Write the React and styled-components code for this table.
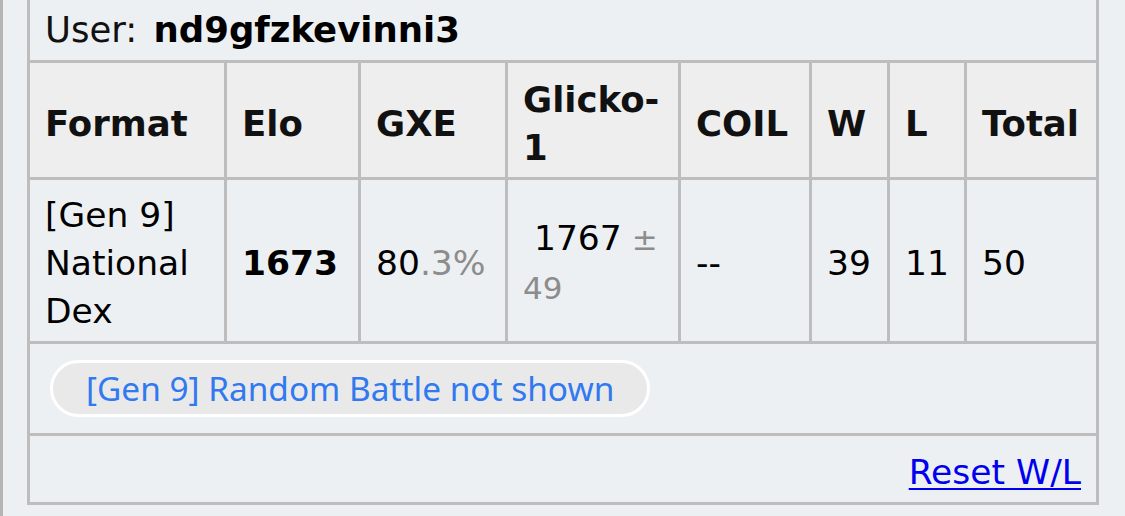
import React from "react";
import styled, { createGlobalStyle } from "styled-components";

const GlobalStyle = createGlobalStyle`
  html, body {
    margin: 0;
    padding: 0;
    background: #edf0f3;
    overflow: hidden;
  }
  body {
    font-family: "DejaVu Sans", Verdana, sans-serif;
  }
`;

const Panel = styled.div`
  box-sizing: border-box;
  width: 1125px;
  height: 516px;
  border-left: 3px solid #b4b4b4;
  padding-left: 24px;
  background: #edf0f3;
  overflow: hidden;
`;

const Ladder = styled.table`
  margin-top: -8px;
  width: 1072px;
  table-layout: fixed;
  border-collapse: separate;
  border-spacing: 0;
  border-left: 3px solid #bdbdbd;
  border-top: 3px solid #bdbdbd;
  font-family: "DejaVu Sans", Verdana, sans-serif;
  font-size: 34.5px;
  line-height: 48px;
  color: #000;
`;

const Cell = styled.td`
  box-sizing: border-box;
  padding: 11px 15px 6px;
  border-right: 3px solid #bdbdbd;
  border-bottom: 3px solid #bdbdbd;
  background: #edf0f3;
  vertical-align: middle;
  text-align: ${(p) => (p.$align === "right" ? "right" : "left")};
`;

const UserCell = styled(Cell)`
  font-size: 35.5px;
  color: #111;
`;

const FooterCell = styled(Cell)`
  padding: 12px 15px 6px;
  text-align: right;
`;

const SizeCol = styled.th`
  box-sizing: border-box;
  width: ${(p) => p.$w}px;
  height: 0;
  padding: 0;
  border: 0;
`;

const Head = styled.th`
  box-sizing: border-box;
  padding: 13px 15px 5px;
  border-right: 3px solid #bdbdbd;
  border-bottom: 3px solid #bdbdbd;
  background: #eeeeee;
  color: #111;
  font-size: 35.5px;
  font-weight: bold;
  text-align: left;
  vertical-align: middle;
`;

const UserName = styled.strong`
  margin-left: 5px;
  font-weight: bold;
  color: #000;
`;

const Muted = styled.span`
  color: #8c8c8c;
  font-size: ${(p) => (p.$small ? "31px" : "inherit")};
`;

const ButtonCell = styled(Cell)`
  padding: 16px 15px 16px 20px;
`;

const Pill = styled.button`
  box-sizing: border-box;
  height: 57px;
  width: 600px;
  margin: 0;
  padding: 0 0 0 33px;
  border: 3px solid #ffffff;
  border-radius: 29px;
  background: #e9e9e9;
  color: #3079f0;
  font-family: "Noto Sans", Roboto, sans-serif;
  font-size: 33.4px;
  line-height: 51px;
  text-align: left;
  white-space: nowrap;
  cursor: pointer;
`;

const ResetLink = styled.a`
  color: #0000ee;
  text-decoration: underline;
  text-underline-offset: 4px;
  text-decoration-thickness: 2px;
`;

const columns = [
  { label: "Format", w: 197 },
  { label: "Elo", w: 134 },
  { label: "GXE", w: 147 },
  { label: "Glicko-1", w: 173 },
  { label: "COIL", w: 131 },
  { label: "W", w: 78 },
  { label: "L", w: 77 },
  { label: "Total", w: 132 },
];

export default function App() {
  return (
    <>
      <GlobalStyle />
      <Panel>
        <Ladder>
          <thead>
            <tr>
              {columns.map((c) => (
                <SizeCol key={c.label} $w={c.w} />
              ))}
            </tr>
            <tr>
              <UserCell colSpan={8}>
                User: <UserName>nd9gfzkevinni3</UserName>
              </UserCell>
            </tr>
            <tr>
              {columns.map((c) => (
                <Head key={c.label}>{c.label}</Head>
              ))}
            </tr>
          </thead>
          <tbody>
            <tr>
              <Cell>[Gen 9] National Dex</Cell>
              <Cell>
                <strong>1673</strong>
              </Cell>
              <Cell>
                80<Muted>.3%</Muted>
              </Cell>
              <Cell>
                {"\u00a0"}1767<Muted $small> ± 49</Muted>
              </Cell>
              <Cell>--</Cell>
              <Cell>39</Cell>
              <Cell>11</Cell>
              <Cell>50</Cell>
            </tr>
            <tr>
              <ButtonCell colSpan={8}>
                <Pill type="button">[Gen 9] Random Battle not shown</Pill>
              </ButtonCell>
            </tr>
            <tr>
              <FooterCell colSpan={8}>
                <ResetLink href="#">Reset W/L</ResetLink>
              </FooterCell>
            </tr>
          </tbody>
        </Ladder>
      </Panel>
    </>
  );
}
